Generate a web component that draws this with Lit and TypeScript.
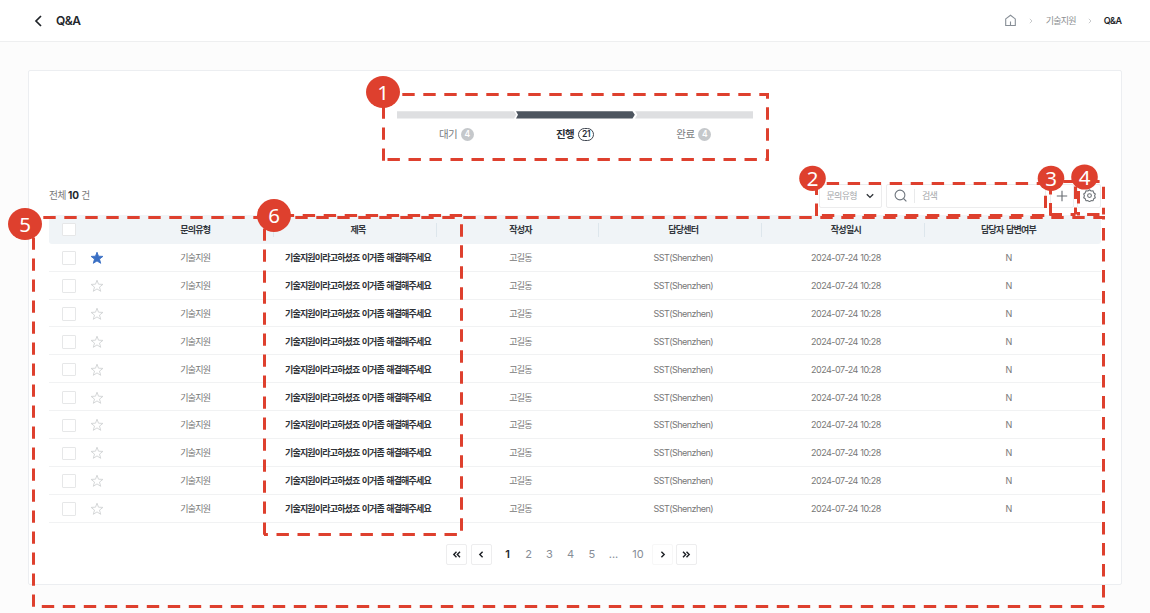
import { LitElement, html, svg, css } from "lit";
import { customElement } from "lit/decorators.js";
import { classMap } from "lit/directives/class-map.js";

const COLUMNS = ["문의유형", "제목", "작성자", "담당센터", "작성일시", "담당자 답변여부"];
const ROWS = Array.from({ length: 10 }, (_, i) => ({
  starred: i === 0,
  type: "기술지원",
  title: "기술지원이라고하셨죠 이거좀 해결해주세요",
  author: "고길동",
  center: "SST(Shenzhen)",
  date: "2024-07-24 10:28",
  answered: "N",
}));

const DASH = 12.4;
const PERIOD = 21;

/** x1, y1, x2, y2 and the distance from the start to the first dash. */
type Side = [number, number, number, number, number];
const SIDES: Side[] = [
  // progress
  [383.5, 94.5, 767.5, 94.5, 18.8],
  [767.5, 93, 767.5, 161, -6.7],
  [769, 159.5, 383.5, 159.5, 12.1],
  [383.5, 161, 383.5, 94.5, 0.2],
  // filter
  [816.5, 183.5, 1047, 183.5, 10.2],
  [1045.5, 182, 1045.5, 215.5, -7.3],
  [1045.5, 215.5, 816.5, 215.5, 1.2],
  [816.5, 216, 816.5, 183.5, 0],
  // add
  [1050.5, 181.5, 1075.5, 181.5, 12.8],
  [1075.5, 181.5, 1075.5, 214.5, 5],
  [1075.5, 214.5, 1049.5, 214.5, -7.5],
  [1050.5, 215.5, 1050.5, 181.5, 0],
  // settings
  [1078.5, 181.5, 1103.5, 181.5, 8.7],
  [1103.5, 180, 1103.5, 214.5, 6.7],
  [1103.5, 214.5, 1078.5, 214.5, 4],
  [1078.5, 215.5, 1078.5, 181.5, 12],
  // list
  [33.5, 217.5, 1104.5, 217.5, 9.8],
  [1103.5, 216, 1103.5, 606.5, -9],
  [1104.2, 606.5, 33.5, 606.5, 0],
  [33.5, 606.8, 33.5, 217.5, 0],
  // title column
  [264.5, 215.5, 462, 215.5, 17.2],
  [461.5, 215.5, 461.5, 534.5, 8.8],
  [461.5, 534.5, 264, 534.5, 4.6],
  [264.5, 535, 264.5, 215.5, 0.2],
];

const BADGES = [
  { n: 1, x: 383, y: 92, rx: 17, ry: 16 },
  { n: 2, x: 812.5, y: 178.3, rx: 13.3, ry: 12.6 },
  { n: 3, x: 1051, y: 178.3, rx: 13.3, ry: 12.6 },
  { n: 4, x: 1084.5, y: 177, rx: 13.3, ry: 12.6 },
  { n: 5, x: 25, y: 224, rx: 17, ry: 16 },
  { n: 6, x: 274, y: 215.5, rx: 17, ry: 16.4 },
];

@customElement("annotation-layer")
class AnnotationLayer extends LitElement {
  static styles = css`
    :host { position: absolute; inset: 0; pointer-events: none; }
    svg { display: block; }
    .side { stroke: #de402e; stroke-width: 3; }
    .disc { fill: #de402e; }
    .num { fill: #fff; font: 400 20.5px "Noto Sans", sans-serif; text-anchor: middle; }
  `;
  render() {
    return html`<svg width="1150" height="613" viewBox="0 0 1150 613" fill="none">
      ${SIDES.map(
        ([x1, y1, x2, y2, first]) => svg`<line class="side" x1=${x1} y1=${y1} x2=${x2} y2=${y2}
          stroke-dasharray="${DASH} ${PERIOD - DASH}" stroke-dashoffset=${PERIOD - first}></line>`
      )}
      ${BADGES.map(
        (b) => svg`<ellipse class="disc" cx=${b.x} cy=${b.y} rx=${b.rx} ry=${b.ry}></ellipse>
          <text class="num" x=${b.x} y=${b.y + 7.6}>${b.n}</text>`
      )}
    </svg>`;
  }
}

@customElement("step-progress")
class StepProgress extends LitElement {
  static styles = css`
    :host { display: block; width: 356px; margin: 0 auto; }
    svg { display: block; }
    .labels { display: grid; grid-template-columns: repeat(3, 1fr); margin-top: 9px; }
    .step { display: flex; align-items: center; justify-content: center; gap: 4px; height: 14px;
      font-size: 10.5px; line-height: 14px; letter-spacing: -0.6px; color: #777b80; }
    .count { box-sizing: border-box; min-width: 12.5px; height: 12.5px; border-radius: 7px; background: #c5c8cb;
      color: #fff; font-size: 8.5px; font-weight: 600; line-height: 12.5px; text-align: center; letter-spacing: 0; }
    .on { color: #2b3038; font-weight: 700; }
    .on .count { min-width: 16px; background: #fff; border: 1px solid #3f4650; color: #2b3038; line-height: 10.5px; letter-spacing: -0.3px; }
  `;
  render() {
    return html`
      <svg width="356" height="8" viewBox="0 0 356 8">
        <path d="M0 .2H117l2.3 3.6-2.3 3.6H0z" fill="#dedfe1" />
        <path d="M119 .2H235.5l2.3 3.6-2.3 3.6H119l2-3.6z" fill="#4d555f" />
        <path d="M238 .2H356v7.2H238l2.3-3.6z" fill="#dedfe1" />
      </svg>
      <div class="labels">
        <div class="step"><span>대기</span><span class="count">4</span></div>
        <div class="step on"><span>진행</span><span class="count">21</span></div>
        <div class="step"><span>완료</span><span class="count">4</span></div>
      </div>`;
  }
}

@customElement("page-nav")
class PageNav extends LitElement {
  static styles = css`
    :host { display: flex; align-items: center; height: 21px; font-size: 11px; color: #868d96; }
    .btn { box-sizing: border-box; width: 21px; height: 21px; border: 1px solid #ededee; border-radius: 2px; background: #fff; }
    .btn + .btn { margin-left: 3.5px; }
    .faint { border-color: #f7f7f7; }
    svg { display: block; }
    .pages { display: grid; grid-template-columns: 21px 21px 21px 21px 21.5px 22px 27px; margin: 0 0 0 5.5px; width: 154.5px; text-align: center; line-height: 21px; }
    .now { color: #22262c; font-weight: 600; }
  `;
  private arrow(d: string) {
    return html`<svg width="19" height="19" viewBox="0 0 19 19" fill="none" stroke="#1c1f24" stroke-width="1.4"><path d=${d} /></svg>`;
  }
  render() {
    return html`
      <div class="btn">${this.arrow("M9.5 6.7 6.8 9.5l2.7 2.8M13 6.7l-2.7 2.8 2.7 2.8")}</div>
      <div class="btn">${this.arrow("M10.6 6.7 7.8 9.5l2.8 2.8")}</div>
      <div class="pages">
        ${["1", "2", "3", "4", "5", "...", "10"].map(
          (p, i) => html`<span class=${classMap({ now: i === 0 })}>${p}</span>`
        )}
      </div>
      <div class="btn faint">${this.arrow("M8.4 6.7l2.8 2.8-2.8 2.8")}</div>
      <div class="btn">${this.arrow("M6 6.7l2.7 2.8L6 12.3M9.5 6.7l2.7 2.8-2.7 2.8")}</div>`;
  }
}

@customElement("app-root")
class AppRoot extends LitElement {
  static styles = css`
    :host { display: block; position: relative; box-sizing: border-box; width: 1150px; height: 613px; overflow: hidden; background: #fcfcfc;
      font-family: Inter, "Noto Sans CJK KR", sans-serif; font-size: 9px; color: #777; }
    svg { display: block; flex: none; }
    .top { display: flex; align-items: center; box-sizing: border-box; height: 42px; padding: 0 28.5px 0 33px; background: #fff; border-bottom: 1px solid #eeeff0; }
    .heading { margin: 0 auto 0 12px; font-size: 12px; font-weight: 600; letter-spacing: -0.5px; line-height: 16px; color: #23262b; }
    .crumbs { display: flex; align-items: center; gap: 12.4px; line-height: 14px; }
    .crumb { letter-spacing: -0.72px; color: #8d8f92; }
    .here { margin-left: -1px; font-weight: 600; letter-spacing: -0.55px; color: #23262b; }
    .card { box-sizing: border-box; width: 1094px; height: 515px; margin: 27.5px 0 0 28px; padding: 40px 20px 0; background: #fff; border: 1px solid #eceef1; border-radius: 2px; }
    .tools { display: flex; align-items: center; height: 24px; margin-top: 42px; }
    .total { margin: -1px auto 0 0; font-size: 9.7px; letter-spacing: -0.5px; }
    .total b { color: #24272c; font-size: 10px; font-weight: 700; letter-spacing: 0; }
    .field { display: flex; align-items: center; box-sizing: border-box; height: 24px; border: 1px solid #ececed; border-radius: 2px; background: #fff; color: #a4a7aa; letter-spacing: -0.7px; }
    .select { width: 63px; padding: 0 7.5px 0 6.5px; justify-content: space-between; }
    .search { width: 160px; margin-left: 4px; padding-left: 7px; }
    .bar { width: 1px; height: 14px; margin: 0 7px; background: #e9eaeb; }
    .square { width: 24px; justify-content: center; margin-left: 3.5px; }
    .table { margin-top: 7.9px; width: 1052px; }
    .row { display: grid; grid-template-columns: 13px 28px 24px repeat(6, 162.65px); align-items: center; box-sizing: border-box; height: 27.89px; padding-top: 2px; border-bottom: 1px solid #f1f2f3; line-height: 14px; }
    .head { height: 28.4px; padding-top: 1px; border: 0; border-radius: 3px; background: #f0f4f7; color: #33373d; font-weight: 600; }
    .check { grid-column: 2; box-sizing: border-box; width: 13.5px; height: 13.5px; margin-left: 0.3px; border: 1px solid #e6e7e8; border-radius: 1px; background: #fff; }
    .head .check { margin-top: -1px; }
    .cell { text-align: center; white-space: nowrap; letter-spacing: -0.52px; word-spacing: 0.4px; }
    .ko { letter-spacing: -0.74px; word-spacing: 0.8px; }
    .title { color: #2f3237; font-weight: 600; letter-spacing: -0.84px; }
    .th { position: relative; }
    .th + .th::before { content: ""; position: absolute; left: -3.6px; top: 0; width: 1px; height: 14px; background: #dde6ec; }
    .first { grid-column: 4; }
    .pager { display: flex; justify-content: center; margin-top: 21.6px; padding-right: 7px; }
  `;

  private star(on: boolean) {
    return html`<svg width="14" height="14" viewBox="0 0 14 14" fill=${on ? "#3a6fc4" : "none"} stroke=${on ? "#3a6fc4" : "#d0d2d4"} stroke-width=".9">
      <path d="M7 1.2l1.5 4 4.4.2-3.4 2.7 1.2 4.2L7 9.9l-3.7 2.4 1.2-4.2L1.1 5.4l4.4-.2z" /></svg>`;
  }
  private crumbArrow() {
    return html`<svg width="4" height="6" viewBox="0 0 4 6" fill="none" stroke="#c9cbcd"><path d="M.8.8 3 3 .8 5.2" /></svg>`;
  }

  render() {
    return html`
      <header class="top">
        <svg width="11" height="14" viewBox="0 0 11 14" fill="none" stroke="#1f2328" stroke-width="1.7"><path d="M8 2 3 7l5 5" /></svg>
        <span class="heading">Q&amp;A</span>
        <nav class="crumbs">
          <svg width="13" height="13" viewBox="0 0 13 13" fill="none" stroke="#878e96" stroke-width="1.1"><path d="M1.7 4.9 6.5 1.2l4.8 3.7v6.6H1.7zM6.5 7.6v3.9" /></svg>
          ${this.crumbArrow()}
          <span class="crumb">기술지원</span>
          ${this.crumbArrow()}
          <span class="here">Q&amp;A</span>
        </nav>
      </header>
      <main class="card">
        <step-progress></step-progress>
        <div class="tools">
          <span class="total">전체 <b>10</b> 건</span>
          <div class="field select"><span>문의유형</span>
            <svg width="8" height="8" viewBox="0 0 8 8" fill="none" stroke="#30343a" stroke-width="1.4"><path d="M.8 2.3 4 5.4l3.2-3.1" /></svg>
          </div>
          <div class="field search">
            <svg width="13" height="13" viewBox="0 0 13 13" fill="none" stroke="#6f767e" stroke-width="1.1"><circle cx="6" cy="6" r="4.9" /><path d="m9.5 9.5 2.9 2.9" /></svg>
            <span class="bar"></span><span>검색</span>
          </div>
          <div class="field square">
            <svg width="12" height="12" viewBox="0 0 12 12" stroke="#666b71" stroke-width="1.1"><path d="M6 .8v10.4M.8 6h10.4" /></svg>
          </div>
          <div class="field square">
            <svg width="13" height="13" viewBox="0 0 13 13" fill="none" stroke="#6f7479" stroke-width="1.1" stroke-linejoin="round"><path d="M6.5.8 8.1 2l2-.1.6 1.9 1.6 1.2-.7 1.8.7 1.9-1.6 1.1-.6 1.9-2-.1-1.6 1.1-1.6-1.1-2 .1-.6-1.9L.7 8.7l.7-1.9L.7 5l1.6-1.2.6-1.9 2 .1z" /><circle cx="6.5" cy="6.6" r="1.9" /></svg>
          </div>
        </div>
        <section class="table">
          <div class="row head">
            <span class="check"></span>
            ${COLUMNS.map((c, i) => html`<span class=${classMap({ cell: true, ko: true, th: true, first: i === 0 })}>${c}</span>`)}
          </div>
          ${ROWS.map(
            (r) => html`<div class="row">
              <span class="check"></span>${this.star(r.starred)}
              <span class="cell ko">${r.type}</span>
              <span class="cell ko title">${r.title}</span>
              <span class="cell ko">${r.author}</span>
              <span class="cell">${r.center}</span>
              <span class="cell">${r.date}</span>
              <span class="cell">${r.answered}</span>
            </div>`
          )}
        </section>
        <div class="pager"><page-nav></page-nav></div>
      </main>
      <annotation-layer></annotation-layer>`;
  }
}
